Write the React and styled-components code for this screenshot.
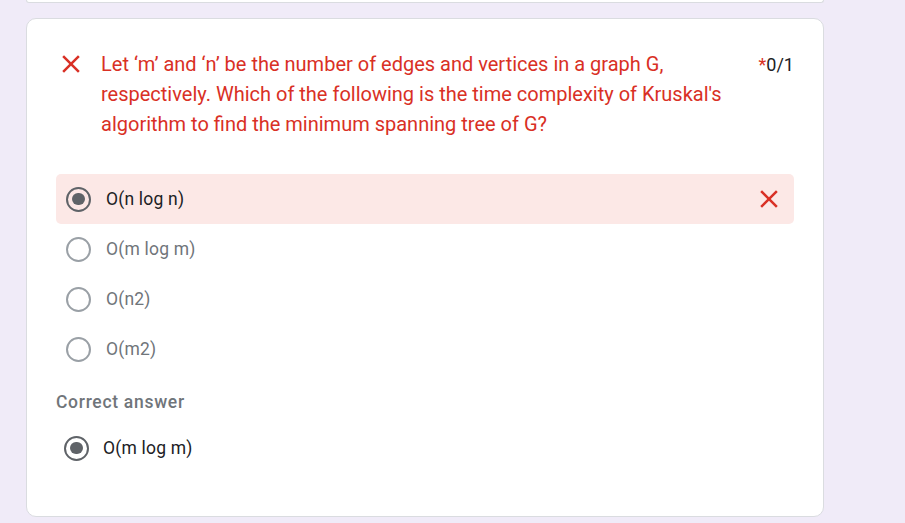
import React from "react";
import styled, { createGlobalStyle } from "styled-components";

const Global = createGlobalStyle`
  html, body { margin: 0; padding: 0; background: #f0ebf8; }
  body { font-family: Roboto, "Noto Sans", Arial, sans-serif; }
`;

const Page = styled.div`
  width: 905px;
  height: 523px;
  overflow: hidden;
  padding-left: 26px;
  box-sizing: border-box;
  display: flex;
  flex-direction: column;
  gap: 15px;
`;

const PrevCard = styled.div`
  width: 796px;
  height: 2px;
  background: #fff;
  border: 1px solid #dadce0;
  border-top: none;
  border-radius: 0 0 8px 8px;
`;

const Card = styled.div`
  background: #fff;
  border: 1px solid #dadce0;
  border-radius: 10px;
  padding: 30px 29px 43px 29px;
  box-sizing: content-box;
  width: 738px;
`;

const Header = styled.div`
  display: flex;
  align-items: flex-start;
`;

const IconBox = styled.div`
  width: 30px;
  height: 30px;
  flex: none;
  display: flex;
  align-items: center;
  justify-content: center;
  color: ${(p) => p.$color || "#d93025"};
`;

const Title = styled.div`
  flex: 1;
  margin-left: 15px;
  margin-right: 30px;
  color: #d93025;
  font-size: 20px;
  line-height: 30px;
  letter-spacing: 0;
`;

const Points = styled.div`
  font-size: 18px;
  line-height: 30px;
  color: #202124;
  flex: none;
  padding-top: 1px;
`;

const Star = styled.span`
  color: #d93025;
`;

const Options = styled.div`
  margin-top: 35px;
  display: flex;
  flex-direction: column;
`;

const Row = styled.div`
  height: 50px;
  display: flex;
  align-items: center;
  padding: 0 ${(p) => (p.$compact ? "8px" : "10px")};
  border-radius: 5px;
  background: ${(p) => (p.$wrong ? "#fce8e6" : "transparent")};
`;

const Radio = styled.div`
  width: 25px;
  height: 25px;
  box-sizing: border-box;
  border-radius: 50%;
  border: 2.5px solid ${(p) => (p.$checked ? "#5f6368" : "#9aa0a6")};
  display: flex;
  align-items: center;
  justify-content: center;
  flex: none;
  &::after {
    content: "";
    display: ${(p) => (p.$checked ? "block" : "none")};
    width: 12.5px;
    height: 12.5px;
    border-radius: 50%;
    background: #5f6368;
  }
`;

const OptionText = styled.span`
  flex: 1;
  margin-left: ${(p) => (p.$compact ? "14px" : "15px")};
  font-size: 17.5px;
  letter-spacing: 0.2px;
  color: ${(p) => (p.$checked ? "#202124" : "#70757a")};
`;

const SectionLabel = styled.div`
  margin-top: 16px;
  font-size: 17.5px;
  line-height: 25px;
  font-weight: 500;
  color: #70757a;
  letter-spacing: 0.7px;
`;

const CorrectList = styled.div`
  margin-top: 8px;
`;

const Cross = ({ size = 30 }) => (
  <svg width={size} height={size} viewBox="0 0 24 24" fill="currentColor">
    <path d="M19 6.41 17.59 5 12 10.59 6.41 5 5 6.41 10.59 12 5 17.59 6.41 19 12 13.41 17.59 19 19 17.59 13.41 12z" />
  </svg>
);

const options = [
  { text: "O(n log n)", checked: true, wrong: true },
  { text: "O(m log m)" },
  { text: "O(n2)" },
  { text: "O(m2)" },
];

export default function App() {
  return (
    <>
      <Global />
      <Page>
        <PrevCard />
        <Card>
          <Header>
            <IconBox>
              <Cross />
            </IconBox>
            <Title>
              Let ‘m’ and ‘n’ be the number of edges and vertices in a graph G,
              respectively. Which of the following is the time complexity of
              Kruskal's algorithm to find the minimum spanning tree of G?
            </Title>
            <Points>
              <Star>*</Star>0/1
            </Points>
          </Header>
          <Options>
            {options.map((o) => (
              <Row key={o.text} $wrong={o.wrong}>
                <Radio $checked={o.checked} />
                <OptionText $checked={o.checked}>{o.text}</OptionText>
                {o.wrong && (
                  <IconBox>
                    <Cross />
                  </IconBox>
                )}
              </Row>
            ))}
          </Options>
          <SectionLabel>Correct answer</SectionLabel>
          <CorrectList>
            <Row $compact>
              <Radio $checked />
              <OptionText $checked $compact>
                O(m log m)
              </OptionText>
            </Row>
          </CorrectList>
        </Card>
      </Page>
    </>
  );
}
